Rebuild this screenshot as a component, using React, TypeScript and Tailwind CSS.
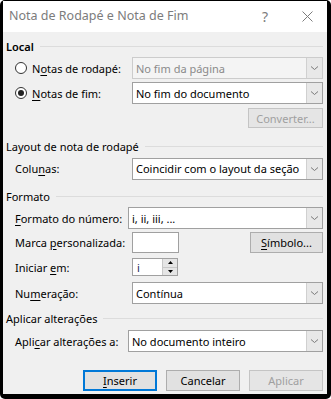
import React from 'react';

const Chevron = () => (
  <svg width="9" height="6" viewBox="0 0 9 6" className="block">
    <path d="M1 1.5 L4.5 4.5 L8 1.5" fill="none" stroke="#7a7a7a" strokeWidth="1" />
  </svg>
);

const U: React.FC<{ children: React.ReactNode }> = ({ children }) => (
  <span className="underline underline-offset-2">{children}</span>
);

const SectionHeader: React.FC<{ title: string; bold?: boolean }> = ({ title, bold }) => (
  <div className="flex items-center h-[16px] pl-[3px]">
    <span className={`${bold ? 'font-semibold' : ''} whitespace-nowrap`}>{title}</span>
    <div className="flex-1 h-px bg-[#dcdcdc] ml-[6px]" />
  </div>
);

const Select: React.FC<{ value: string; disabled?: boolean }> = ({ value, disabled }) => (
  <div
    className={`flex-1 min-w-0 flex h-[22px] border ${
      disabled ? 'border-[#cccccc] bg-[#f4f4f4] text-[#8a8a8a]' : 'border-[#a0a0a0] bg-white text-black'
    }`}
  >
    <div className="flex-1 min-w-0 flex items-center pl-[3px] whitespace-nowrap overflow-hidden">{value}</div>
    <div className="w-[16px] flex-none flex items-center justify-center bg-[#e8e8e8] border-l border-[#d0d0d0]">
      <Chevron />
    </div>
  </div>
);

const Button: React.FC<{
  children: React.ReactNode;
  variant?: 'default' | 'primary' | 'disabled';
  width: string;
  height?: string;
}> = ({ children, variant = 'default', width, height = 'h-[21px]' }) => (
  <div
    className={`${width} ${height} flex-none flex items-center justify-center whitespace-nowrap ${
      variant === 'primary'
        ? 'bg-[#e1e1e1] border-2 border-[#0078d7]'
        : variant === 'disabled'
        ? 'bg-[#e5e5e5] border border-[#c4c4c4] text-[#a0a0a0]'
        : 'bg-[#e1e1e1] border border-[#adadad]'
    }`}
  >
    {children}
  </div>
);

const Radio: React.FC<{ checked?: boolean }> = ({ checked }) => (
  <div className="w-[12px] h-[12px] flex-none rounded-full border border-[#333333] bg-white flex items-center justify-center mr-[5px]">
    {checked && <div className="w-[6px] h-[6px] rounded-full bg-[#222222]" />}
  </div>
);

const labelCls = 'flex-none whitespace-nowrap';

export default function App() {
  return (
    <div className="w-[331px] h-[399px] bg-white overflow-hidden">
      <div
        className="w-full h-full bg-black rounded-[5px] pt-[1px] pl-[3px] pr-[4px] pb-[5px] text-[11px] leading-none text-black"
        style={{ fontFamily: '"Noto Sans", "Open Sans", sans-serif' }}
      >
        <div className="w-full h-full flex flex-col bg-[#f0f0f0]">
          {/* Title bar */}
          <div className="h-[31px] flex-none bg-white flex items-center pl-[6px] pr-[14px] text-[#7c7c7c]">
            <span className="flex-1 text-[12.5px] whitespace-nowrap">Nota de Rodapé e Nota de Fim</span>
            <span className="text-[14px] mr-[34px]">?</span>
            <svg width="11" height="11" viewBox="0 0 11 11">
              <path d="M0.5 0.5 L10.5 10.5 M10.5 0.5 L0.5 10.5" stroke="#7c7c7c" strokeWidth="1" />
            </svg>
          </div>

          <div className="flex flex-col pr-[4px] pt-[6px]">
            <SectionHeader title="Local" bold />

            <div className="flex items-center h-[22px] mt-[3px] pl-[12px]">
              <div className={`w-[117px] flex items-center ${labelCls}`}>
                <Radio />
                <span>
                  N<U>o</U>tas de rodapé:
                </span>
              </div>
              <Select value="No fim da página" disabled />
            </div>

            <div className="flex items-center h-[22px] mt-[3px] pl-[12px]">
              <div className={`w-[117px] flex items-center ${labelCls}`}>
                <Radio checked />
                <span>
                  <U>N</U>otas de fim:
                </span>
              </div>
              <Select value="No fim do documento" />
            </div>

            <div className="flex justify-end mt-[4px]">
              <Button variant="disabled" width="w-[75px]" height="h-[20px]">
                Converter...
              </Button>
            </div>

            <div className="mt-[10px]">
              <SectionHeader title="Layout de nota de rodapé" />
            </div>

            <div className="flex items-center h-[23px] mt-[3px] pl-[12px]">
              <div className={`w-[117px] ${labelCls}`}>
                Colu<U>n</U>as:
              </div>
              <Select value="Coincidir com o layout da seção" />
            </div>

            <div className="mt-[8px]">
              <SectionHeader title="Formato" />
            </div>

            <div className="flex items-center h-[22px] mt-[3px] pl-[12px]">
              <div className={`w-[113px] ${labelCls}`}>
                <U>F</U>ormato do número:
              </div>
              <Select value="i, ii, iii, ..." />
            </div>

            <div className="flex items-center h-[21px] mt-[3px] pl-[12px]">
              <div className={`w-[117px] ${labelCls}`}>
                Marca <U>p</U>ersonalizada:
              </div>
              <div className="w-[47px] flex-none h-[21px] bg-white border border-[#a0a0a0]" />
              <div className="flex-1" />
              <Button width="w-[73px]">
                <span>
                  <U>S</U>ímbolo...
                </span>
              </Button>
            </div>

            <div className="flex items-center h-[18px] mt-[5px] pl-[12px]">
              <div className={`w-[117px] ${labelCls}`}>
                Iniciar <U>e</U>m:
              </div>
              <div className="w-[46px] flex-none h-[18px] flex bg-white border border-[#a0a0a0]">
                <div className="flex-1 flex items-center pl-[4px] text-[#1a1a5a]">i</div>
                <div className="w-[15px] flex flex-col border-l border-[#c8c8c8]">
                  <div className="flex-1 flex items-center justify-center bg-[#e5e5e5] border-b border-[#c8c8c8]">
                    <svg width="5" height="3" viewBox="0 0 5 3">
                      <path d="M0 3 L2.5 0 L5 3 Z" fill="#000" />
                    </svg>
                  </div>
                  <div className="flex-1 flex items-center justify-center bg-[#e5e5e5]">
                    <svg width="5" height="3" viewBox="0 0 5 3">
                      <path d="M0 0 L2.5 3 L5 0 Z" fill="#000" />
                    </svg>
                  </div>
                </div>
              </div>
            </div>

            <div className="flex items-center h-[22px] mt-[6px] pl-[12px]">
              <div className={`w-[117px] ${labelCls}`}>
                Nu<U>m</U>eração:
              </div>
              <Select value="Contínua" />
            </div>

            <div className="mt-[6px]">
              <SectionHeader title="Aplicar alterações" />
            </div>

            <div className="flex items-center h-[22px] mt-[4px] pl-[12px]">
              <div className={`w-[113px] ${labelCls}`}>
                Apli<U>c</U>ar alterações a:
              </div>
              <Select value="No documento inteiro" />
            </div>

            <div className="flex justify-end gap-[9px] mt-[18px]">
              <Button variant="primary" width="w-[74px]">
                <span>
                  <U>I</U>nserir
                </span>
              </Button>
              <Button width="w-[74px]">Cancelar</Button>
              <Button variant="disabled" width="w-[74px]">
                Aplicar
              </Button>
            </div>
          </div>
        </div>
      </div>
    </div>
  );
}
